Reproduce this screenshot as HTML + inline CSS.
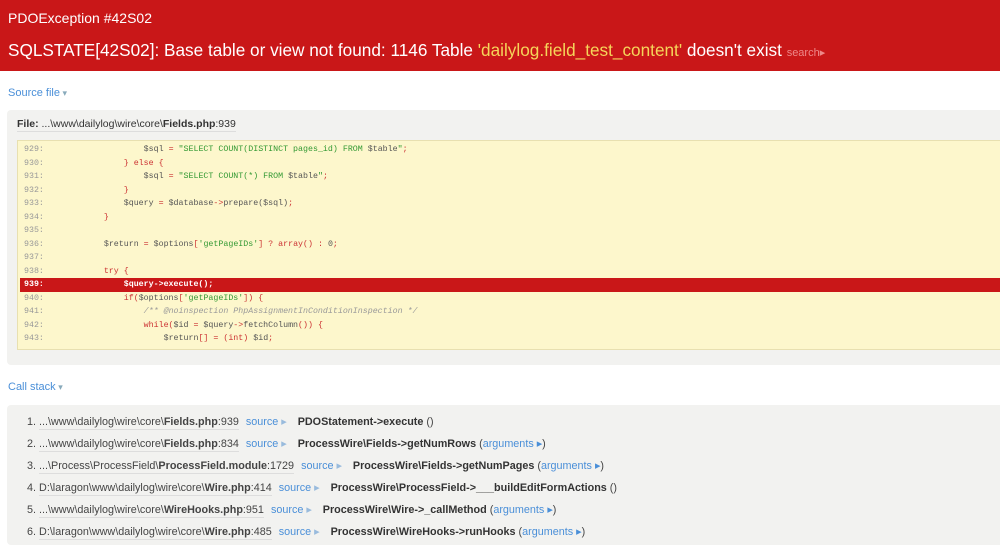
<!DOCTYPE html>
<html><head><meta charset="utf-8"><style>
*{margin:0;padding:0;box-sizing:border-box}
body{width:1000px;height:537px;overflow:hidden;background:#fff;font-family:"Liberation Sans",Arial,sans-serif;position:relative}
.hdr{position:absolute;left:0;top:0;width:1000px;height:71px;background:#c91718;color:#fff}
.t1{position:absolute;left:8px;top:10px;font-size:14px}
.t2{position:absolute;left:8px;top:40px;font-size:17.2px;white-space:nowrap}
.t2 .y{color:#f5d55a}
.t2 .s{color:#e88;font-size:11px}
.lnk{position:absolute;left:8px;color:#4a8fd8;font-size:11px}
.lnk:after{content:" \25BE";font-size:9px;color:#8ab}
.box{position:absolute;left:7px;right:0;background:#f2f2f0;border-radius:4px 0 0 4px}
.file{position:absolute;left:17px;top:118px;font-size:10.5px;color:#333;border-bottom:1px solid #ddd;padding-bottom:1px}
.code{position:absolute;left:17px;top:140px;right:0;height:210px;background:#fdf7cc;border:1px solid #e8e0b0;border-right:none}
.ln{position:absolute;left:2px;right:0;height:13.5px;font-family:"Liberation Mono",monospace;font-size:8.3px;line-height:14px;white-space:pre;color:#c33}
.ln b{font-weight:normal;color:#999;display:inline-block;width:44px;padding-left:4px}
.ln.hl{background:#c91718;color:#fff;font-weight:bold}
.ln.hl b{color:#fff;font-weight:bold}
.g{color:#393}.c{color:#999;font-style:italic}.k{color:#555}
.cs{position:absolute;left:27px;font-size:10.8px;color:#444;white-space:nowrap}
.cs .p{border-bottom:1px solid #ddd;padding-bottom:1px}
.cs .src{color:#4a8fd8;margin-left:4px}
.cs .src:after{content:" \25B8";color:#9bd}
.cs .fn{font-weight:bold;color:#333;margin-left:8px}
.cs .a{color:#4a8fd8}
</style></head><body>
<div class="hdr">
<div class="t1">PDOException #42S02</div>
<div class="t2">SQLSTATE[42S02]: Base table or view not found: 1146 Table <span class="y">'dailylog.field_test_content'</span> doesn't exist <span class="s">search▸</span></div>
</div>
<div class="lnk" style="top:87px">Source file</div>
<div class="box" style="top:110px;height:255px"></div>
<div class="file"><b>File:</b> ...\www\dailylog\wire\core\<b>Fields.php</b>:939</div>
<div class="code">
<div class="ln" style="top:2px"><b>929:</b>                <span class="k">$sql</span> = <span class="g">"SELECT COUNT(DISTINCT pages_id) FROM</span> <span class="k">$table</span><span class="g">"</span>;</div>
<div class="ln" style="top:15.5px"><b>930:</b>            } else {</div>
<div class="ln" style="top:29px"><b>931:</b>                <span class="k">$sql</span> = <span class="g">"SELECT COUNT(*) FROM</span> <span class="k">$table</span><span class="g">"</span>;</div>
<div class="ln" style="top:42.5px"><b>932:</b>            }</div>
<div class="ln" style="top:56px"><b>933:</b>            <span class="k">$query</span> = <span class="k">$database</span>-&gt;<span class="k">prepare($sql)</span>;</div>
<div class="ln" style="top:69.5px"><b>934:</b>        }</div>
<div class="ln" style="top:83px"><b>935:</b></div>
<div class="ln" style="top:96.5px"><b>936:</b>        <span class="k">$return</span> = <span class="k">$options</span>[<span class="g">'getPageIDs'</span>] ? array() : <span class="k">0</span>;</div>
<div class="ln" style="top:110px"><b>937:</b></div>
<div class="ln" style="top:123.5px"><b>938:</b>        try {</div>
<div class="ln hl" style="top:137px"><b>939:</b>            $query-&gt;execute();</div>
<div class="ln" style="top:150.5px"><b>940:</b>            if(<span class="k">$options</span>[<span class="g">'getPageIDs'</span>]) {</div>
<div class="ln" style="top:164px"><b>941:</b>                <span class="c">/** @noinspection PhpAssignmentInConditionInspection */</span></div>
<div class="ln" style="top:177.5px"><b>942:</b>                while(<span class="k">$id</span> = <span class="k">$query</span>-&gt;<span class="k">fetchColumn</span>()) {</div>
<div class="ln" style="top:191px"><b>943:</b>                    <span class="k">$return</span>[] = (int) <span class="k">$id</span>;</div>
</div>
<div class="lnk" style="top:381px">Call stack</div>
<div class="box" style="top:405px;height:140px"></div>
<div class="cs" style="top:415px">1. <span class="p">...\www\dailylog\wire\core\<b>Fields.php</b>:939</span> <span class="src">source</span> <span class="fn">PDOStatement-&gt;execute</span> ()</div>
<div class="cs" style="top:437px">2. <span class="p">...\www\dailylog\wire\core\<b>Fields.php</b>:834</span> <span class="src">source</span> <span class="fn">ProcessWire\Fields-&gt;getNumRows</span> (<span class="a">arguments ▸</span>)</div>
<div class="cs" style="top:459px">3. <span class="p">...\Process\ProcessField\<b>ProcessField.module</b>:1729</span> <span class="src">source</span> <span class="fn">ProcessWire\Fields-&gt;getNumPages</span> (<span class="a">arguments ▸</span>)</div>
<div class="cs" style="top:481px">4. <span class="p">D:\laragon\www\dailylog\wire\core\<b>Wire.php</b>:414</span> <span class="src">source</span> <span class="fn">ProcessWire\ProcessField-&gt;___buildEditFormActions</span> ()</div>
<div class="cs" style="top:503px">5. <span class="p">...\www\dailylog\wire\core\<b>WireHooks.php</b>:951</span> <span class="src">source</span> <span class="fn">ProcessWire\Wire-&gt;_callMethod</span> (<span class="a">arguments ▸</span>)</div>
<div class="cs" style="top:525px">6. <span class="p">D:\laragon\www\dailylog\wire\core\<b>Wire.php</b>:485</span> <span class="src">source</span> <span class="fn">ProcessWire\WireHooks-&gt;runHooks</span> (<span class="a">arguments ▸</span>)</div>
</body></html>
